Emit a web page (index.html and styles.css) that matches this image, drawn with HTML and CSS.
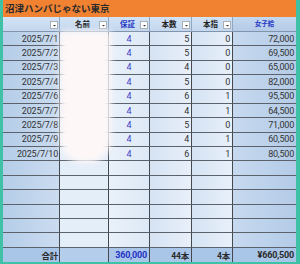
FILE: index.html
```html
<!DOCTYPE html>
<html lang="ja">
<head>
<meta charset="utf-8">
<link rel="stylesheet" href="styles.css">
</head>
<body>
<div class="sheet">
  <div class="title">沼津ハンバじゃない東京</div>
  <div class="grid">
    <div class="h c1"><span class="dd"><svg viewBox="0 0 7 7" width="7" height="7"><path d="M2 3h3L3.5 4.6z" fill="#333"/></svg></span></div>
    <div class="h c2"><span class="ht">名前</span><span class="dd"><svg viewBox="0 0 7 7" width="7" height="7"><path d="M2 3h3L3.5 4.6z" fill="#333"/></svg></span></div>
    <div class="h c3"><span class="ht blue">保証</span><span class="dd"><svg viewBox="0 0 7 7" width="7" height="7"><path d="M2 3h3L3.5 4.6z" fill="#333"/></svg></span></div>
    <div class="h c4"><span class="ht">本数</span><span class="dd"><svg viewBox="0 0 7 7" width="7" height="7"><path d="M2 3h3L3.5 4.6z" fill="#333"/></svg></span></div>
    <div class="h c5"><span class="ht">本指</span><span class="dd"><svg viewBox="0 0 7 7" width="7" height="7"><path d="M2 3h3L3.5 4.6z" fill="#333"/></svg></span></div>
    <div class="h c6"><span class="ht blue small">女子給</span></div>

    <div class="c c1">2025/7/1</div><div class="c c2"></div><div class="c c3">4</div><div class="c c4">5</div><div class="c c5">0</div><div class="c c6">72,000</div>
    <div class="c c1">2025/7/2</div><div class="c c2"></div><div class="c c3">4</div><div class="c c4">5</div><div class="c c5">0</div><div class="c c6">69,500</div>
    <div class="c c1">2025/7/3</div><div class="c c2"></div><div class="c c3">4</div><div class="c c4">4</div><div class="c c5">0</div><div class="c c6">65,000</div>
    <div class="c c1">2025/7/4</div><div class="c c2"></div><div class="c c3">4</div><div class="c c4">5</div><div class="c c5">0</div><div class="c c6">82,000</div>
    <div class="c c1">2025/7/6</div><div class="c c2"></div><div class="c c3">4</div><div class="c c4">6</div><div class="c c5">1</div><div class="c c6">95,500</div>
    <div class="c c1">2025/7/7</div><div class="c c2"></div><div class="c c3">4</div><div class="c c4">4</div><div class="c c5">1</div><div class="c c6">64,500</div>
    <div class="c c1">2025/7/8</div><div class="c c2"></div><div class="c c3">4</div><div class="c c4">5</div><div class="c c5">0</div><div class="c c6">71,000</div>
    <div class="c c1">2025/7/9</div><div class="c c2"></div><div class="c c3">4</div><div class="c c4">4</div><div class="c c5">1</div><div class="c c6">60,500</div>
    <div class="c c1">2025/7/10</div><div class="c c2"></div><div class="c c3">4</div><div class="c c4">6</div><div class="c c5">1</div><div class="c c6">80,500</div>

    <div class="c c1"></div><div class="c c2"></div><div class="c c3"></div><div class="c c4"></div><div class="c c5"></div><div class="c c6"></div>
    <div class="c c1"></div><div class="c c2"></div><div class="c c3"></div><div class="c c4"></div><div class="c c5"></div><div class="c c6"></div>
    <div class="c c1"></div><div class="c c2"></div><div class="c c3"></div><div class="c c4"></div><div class="c c5"></div><div class="c c6"></div>
    <div class="c c1"></div><div class="c c2"></div><div class="c c3"></div><div class="c c4"></div><div class="c c5"></div><div class="c c6"></div>
    <div class="c c1"></div><div class="c c2"></div><div class="c c3"></div><div class="c c4"></div><div class="c c5"></div><div class="c c6"></div>
    <div class="c c1"></div><div class="c c2"></div><div class="c c3"></div><div class="c c4"></div><div class="c c5"></div><div class="c c6"></div>

    <div class="t c1 jp">合計</div><div class="t c2"></div><div class="t c3 tblue">360,000</div><div class="t c4 jp">44本</div><div class="t c5 jp">4本</div><div class="t c6">¥660,500</div>

    <div class="mask"></div>
  </div>
</div>
</body>
</html>
```

FILE: styles.css
```css
html, body {
  margin: 0;
  padding: 0;
  background: #ffffff;
}

.sheet {
  width: 300px;
  height: 264px;
  box-sizing: border-box;
  border-left: 3px solid #3ec1a4;
  border-right: 4px solid #3ec1a4;
  border-bottom: 2px solid #3ec1a4;
  display: flex;
  flex-direction: column;
  overflow: hidden;
}

.title {
  height: 17px;
  flex: none;
  background: #f08232;
  color: #2a2a2a;
  font-family: "Noto Sans CJK JP", "Noto Sans", sans-serif;
  font-weight: 700;
  font-size: 9.5px;
  line-height: 16px;
  padding-left: 2px;
}

.grid {
  position: relative;
  flex: 1;
  display: grid;
  grid-template-columns: 57px 49px 41px 42px 41px 63px;
  grid-template-rows: 15px repeat(16, 1fr);
}

.h, .c, .t {
  box-sizing: border-box;
  display: flex;
  align-items: center;
  justify-content: flex-end;
  border-right: 1px solid #45494f;
  border-bottom: 1px solid #5c626b;
  font-family: Roboto, "Noto Sans", sans-serif;
  font-size: 9px;
  letter-spacing: -0.2px;
  color: #333;
  padding-right: 2px;
  overflow: hidden;
  white-space: nowrap;
}

.h.c6, .c.c6, .t.c6 { border-right: none; }

.h {
  position: relative;
  justify-content: center;
  background: linear-gradient(to bottom, #d3e3f4, #c3d7ee);
  border-right-color: #90a7c3;
  border-bottom-color: #8194ab;
  padding-right: 3px;
}

.h.c6 {
  background: linear-gradient(to bottom, #c4d8ee, #b4cbe7);
  padding-right: 0;
}

.ht {
  font-family: "Noto Sans CJK JP", sans-serif;
  font-weight: 700;
  font-size: 7.5px;
  letter-spacing: 0;
  color: #222;
  margin-top: -2px;
}

.ht.blue { color: #2638c4; }
.ht.small { font-size: 6.5px; }

.dd {
  position: absolute;
  right: 1px;
  bottom: 2px;
  width: 8px;
  height: 8px;
  background: #ffffff;
  border: 1px solid #a9b0b8;
  box-sizing: border-box;
  display: flex;
  align-items: center;
  justify-content: center;
}

.dd svg { display: block; width: 7px; height: 7px; flex: none; }

.c.c1 {
  background: linear-gradient(to right, #b5cde8, #cbdcf0);
  padding-right: 1px;
}
.c.c2 { background: #e4eef9; }
.c.c3 {
  background: linear-gradient(to right, #e9f1fa, #dde9f6);
  justify-content: center;
  padding-right: 0;
  color: #3c3cc4;
}
.c.c4, .c.c5 { background: linear-gradient(to right, #d5e3f3, #e8f0fa); }
.c.c6 { background: linear-gradient(to right, #c6d9ef, #b4cbe7); }

.t {
  background: #a9c5e7;
  font-weight: 700;
  color: #2a2a2a;
  border-bottom: none;
}
.t.c2 { background: #b3cdea; }
.t.jp {
  font-family: Roboto, "Noto Sans CJK JP", sans-serif;
  font-size: 8.5px;
}
.t.c1 { padding-right: 1px; }
.tblue { color: #2433c8; }

.mask {
  position: absolute;
  left: 57px;
  top: 14px;
  width: 51px;
  height: 132px;
  background: #fdf7f7;
  border-radius: 0 0 24px 24px;
  filter: blur(3px);
  pointer-events: none;
}
```
